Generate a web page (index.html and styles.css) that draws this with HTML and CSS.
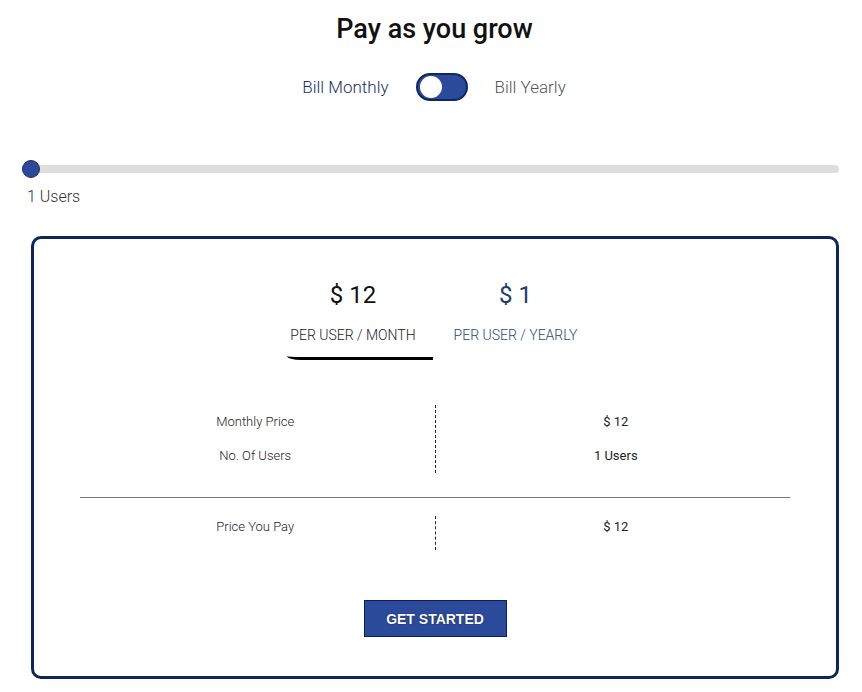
FILE: index.html
```html
<!DOCTYPE html>
<html lang="en">

<head>
    <meta charset="UTF-8">
    <meta name="viewport" content="width=device-width, initial-scale=1.0">
    <title>Pricing</title>
    <link rel="stylesheet" href="styles.css">
</head>

<body>
    <h1 class="title">Pay as you grow</h1>

    <div class="billing">
        <span class="bill-label active">Bill Monthly</span>
        <span class="switch"><span class="knob"></span></span>
        <span class="bill-label">Bill Yearly</span>
    </div>

    <div class="slider">
        <div class="track"><span class="thumb"></span></div>
        <p class="users">1 Users</p>
    </div>

    <div class="card">
        <div class="tabs">
            <div class="tab selected">
                <div class="price">$ 12</div>
                <div class="period">PER USER / MONTH</div>
            </div>
            <div class="tab">
                <div class="price">$ 1</div>
                <div class="period">PER USER / YEARLY</div>
            </div>
        </div>

        <div class="summary">
            <div class="rows">
                <div class="col left">
                    <p>Monthly Price</p>
                    <p>No. Of Users</p>
                </div>
                <div class="col right">
                    <p>$ 12</p>
                    <p>1 Users</p>
                </div>
            </div>
            <hr>
            <div class="rows total">
                <div class="col left">
                    <p>Price You Pay</p>
                </div>
                <div class="col right">
                    <p>$ 12</p>
                </div>
            </div>
        </div>

        <button class="start">GET STARTED</button>
    </div>
</body>

</html>
```

FILE: styles.css
```css
body {
    margin: 0;
    padding: 0 22px 0 22px;
    font-family: Roboto, "Noto Sans", sans-serif;
    color: #222;
    background: #fff;
}

.title {
    margin: 13px 0 0 7px;
    text-align: center;
    font-size: 27px;
    font-weight: 500;
    line-height: 32px;
    color: #111;
}

.billing {
    display: flex;
    justify-content: center;
    align-items: center;
    gap: 27px;
    margin: 27px 0 0 6px;
    height: 30px;
}

.bill-label {
    font-size: 17px;
    font-weight: 300;
    color: #555;
}

.bill-label.active {
    color: #1a3263;
}

.switch {
    width: 46px;
    height: 24px;
    border: 2px solid #0d2a5c;
    border-radius: 14px;
    background: #2b4a9b;
    display: flex;
    align-items: center;
    padding-left: 2px;
}

.knob {
    width: 22px;
    height: 22px;
    border-radius: 50%;
    background: #fff;
}

.slider {
    margin: 63px 1px 0 0;
}

.track {
    height: 8px;
    background: #dedede;
    border-radius: 4px;
    display: flex;
    align-items: center;
}

.thumb {
    width: 16px;
    height: 16px;
    border-radius: 50%;
    background: #2b4a9b;
    border: 1px solid #1a2f66;
}

.users {
    margin: 14px 0 0 5px;
    font-size: 16px;
    font-weight: 300;
    color: #333;
}

.card {
    margin: 30px 1px 0 9px;
    height: 437px;
    border: 3px solid #0b2757;
    border-radius: 10px;
    display: flex;
    flex-direction: column;
    align-items: center;
}

.tabs {
    display: flex;
    margin-top: 41px;
    margin-left: -4px;
}

.tab {
    width: 146px;
    text-align: center;
    padding-bottom: 14px;
    border-bottom: 3px solid transparent;
}

.tab.selected {
    border-bottom-color: #000;
    border-bottom-left-radius: 14px 4px;
    padding-right: 14px;
    width: 132px;
}

.tab .price {
    font-size: 24px;
    line-height: 30px;
    color: #111;
}

.tab .period {
    margin-top: 17px;
    font-size: 14px;
    font-weight: 300;
    color: #222;
}

.tab + .tab .price {
    color: #1c3d6b;
    margin-left: 19px;
}

.tab + .tab .period {
    color: #2a4a78;
    margin-left: 19px;
}

.summary {
    width: 710px;
    margin-top: 45px;
}

.rows {
    display: flex;
}

.col {
    flex: 1;
    text-align: center;
    font-size: 13px;
    font-weight: 300;
    color: #222;
}

.col p {
    margin: 0;
    line-height: 34px;
}

.col.left {
    border-right: 1px dashed #222;
}

.col.left p {
    padding-right: 4px;
}

.col.right p {
    font-weight: 400;
    padding-left: 6px;
}

.total .col p {
    line-height: 22px;
    padding-bottom: 12px;
}

.summary hr {
    margin: 24px 0 18px;
    border: 0;
    border-top: 1px solid #777;
}

.start {
    margin-top: 50px;
    width: 143px;
    height: 37px;
    background: #2b4a9b;
    border: 1px solid #0b2050;
    color: #fff;
    font-family: "Liberation Sans", Arial, sans-serif;
    font-weight: bold;
    font-size: 14px;
    text-shadow: 0 0 1px #000;
    cursor: pointer;
}
```
